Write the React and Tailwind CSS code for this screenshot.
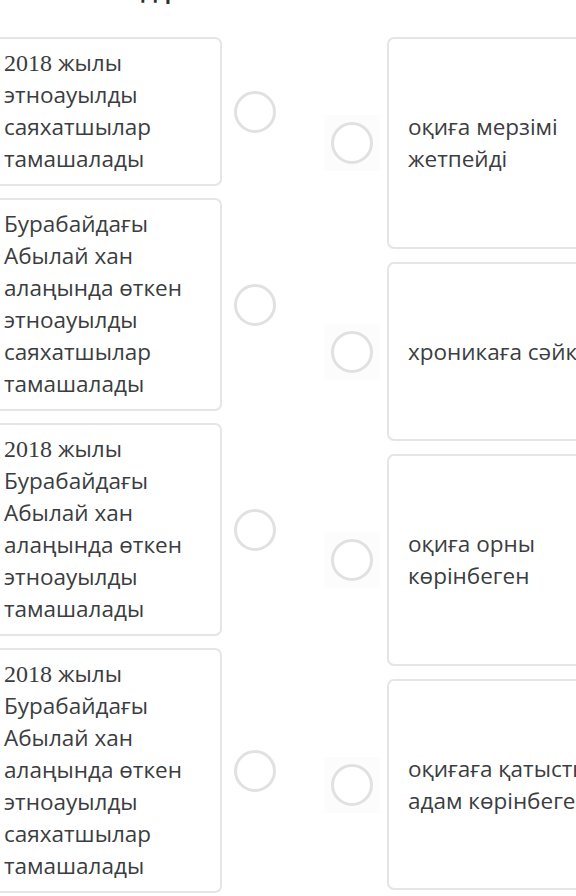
const leftItems = [
  { year: true, lines: 'жылы этноауылды саяхатшылар тамашалады' },
  { year: false, lines: 'Бурабайдағы Абылай хан алаңында өткен этноауылды саяхатшылар тамашалады' },
  { year: true, lines: 'жылы Бурабайдағы Абылай хан алаңында өткен этноауылды тамашалады' },
  { year: true, lines: 'жылы Бурабайдағы Абылай хан алаңында өткен этноауылды саяхатшылар тамашалады' },
]

const rightItems = [
  { text: 'оқиға мерзімі жетпейді', h: 'h-[212px]' },
  { text: 'хроникаға сәйкес', h: 'h-[179px]' },
  { text: 'оқиға орны көрінбеген', h: 'h-[212px]' },
  { text: 'оқиғаға қатысты адам көрінбеген', h: 'h-[211px]' },
]

function Radio() {
  return (
    <div className="w-[42px] h-[42px] rounded-full border-[3px] border-[#dfe1e3] bg-white flex-shrink-0" />
  )
}

export default function App() {
  return (
    <div
      className="w-[576px] h-[896px] overflow-hidden bg-white text-[#3b3d40]"
      style={{ fontFamily: '"Open Sans", "Noto Sans", sans-serif' }}
    >
      {/* heading, mostly scrolled off */}
      <div className="h-[37px] overflow-hidden">
        <div className="mt-[-30px] pl-[4px] text-[26px] leading-[36px] font-semibold text-[#2f3133] whitespace-nowrap">
          Сәйкестендір
        </div>
      </div>

      <div className="flex">
        {/* left column */}
        <div className="flex flex-col gap-[12px] w-[330px] flex-shrink-0">
          {leftItems.map((item, i) => (
            <div key={i} className="flex items-center">
              <div className="ml-[-10px] w-[232px] flex-shrink-0 rounded-[7px] border-2 border-[#e3e5e7] pl-[12px] pr-2 pt-[8px] pb-[9px] text-[22.5px] leading-[32px]">
                {item.year && (
                  <span style={{ fontFamily: '"Liberation Serif", serif' }} className="text-[24px]">
                    2018{' '}
                  </span>
                )}
                {item.lines}
              </div>
              <div className="ml-[12px]">
                <Radio />
              </div>
            </div>
          ))}
        </div>

        {/* right column */}
        <div className="flex flex-col gap-[13px] flex-shrink-0">
          {rightItems.map((item, i) => (
            <div key={i} className="flex items-center">
              <div className="w-[56px] h-[56px] bg-[#fcfcfc] flex items-center justify-center ml-[-6px] flex-shrink-0">
                <Radio />
              </div>
              <div
                className={`ml-[7px] w-[250px] flex-shrink-0 ${item.h} rounded-[7px] border-2 border-[#e3e5e7] pl-[19px] pr-2 flex items-center text-[22.5px] leading-[32px]`}
              >
                <span className="w-[205px]">{item.text}</span>
              </div>
            </div>
          ))}
        </div>
      </div>
    </div>
  )
}
